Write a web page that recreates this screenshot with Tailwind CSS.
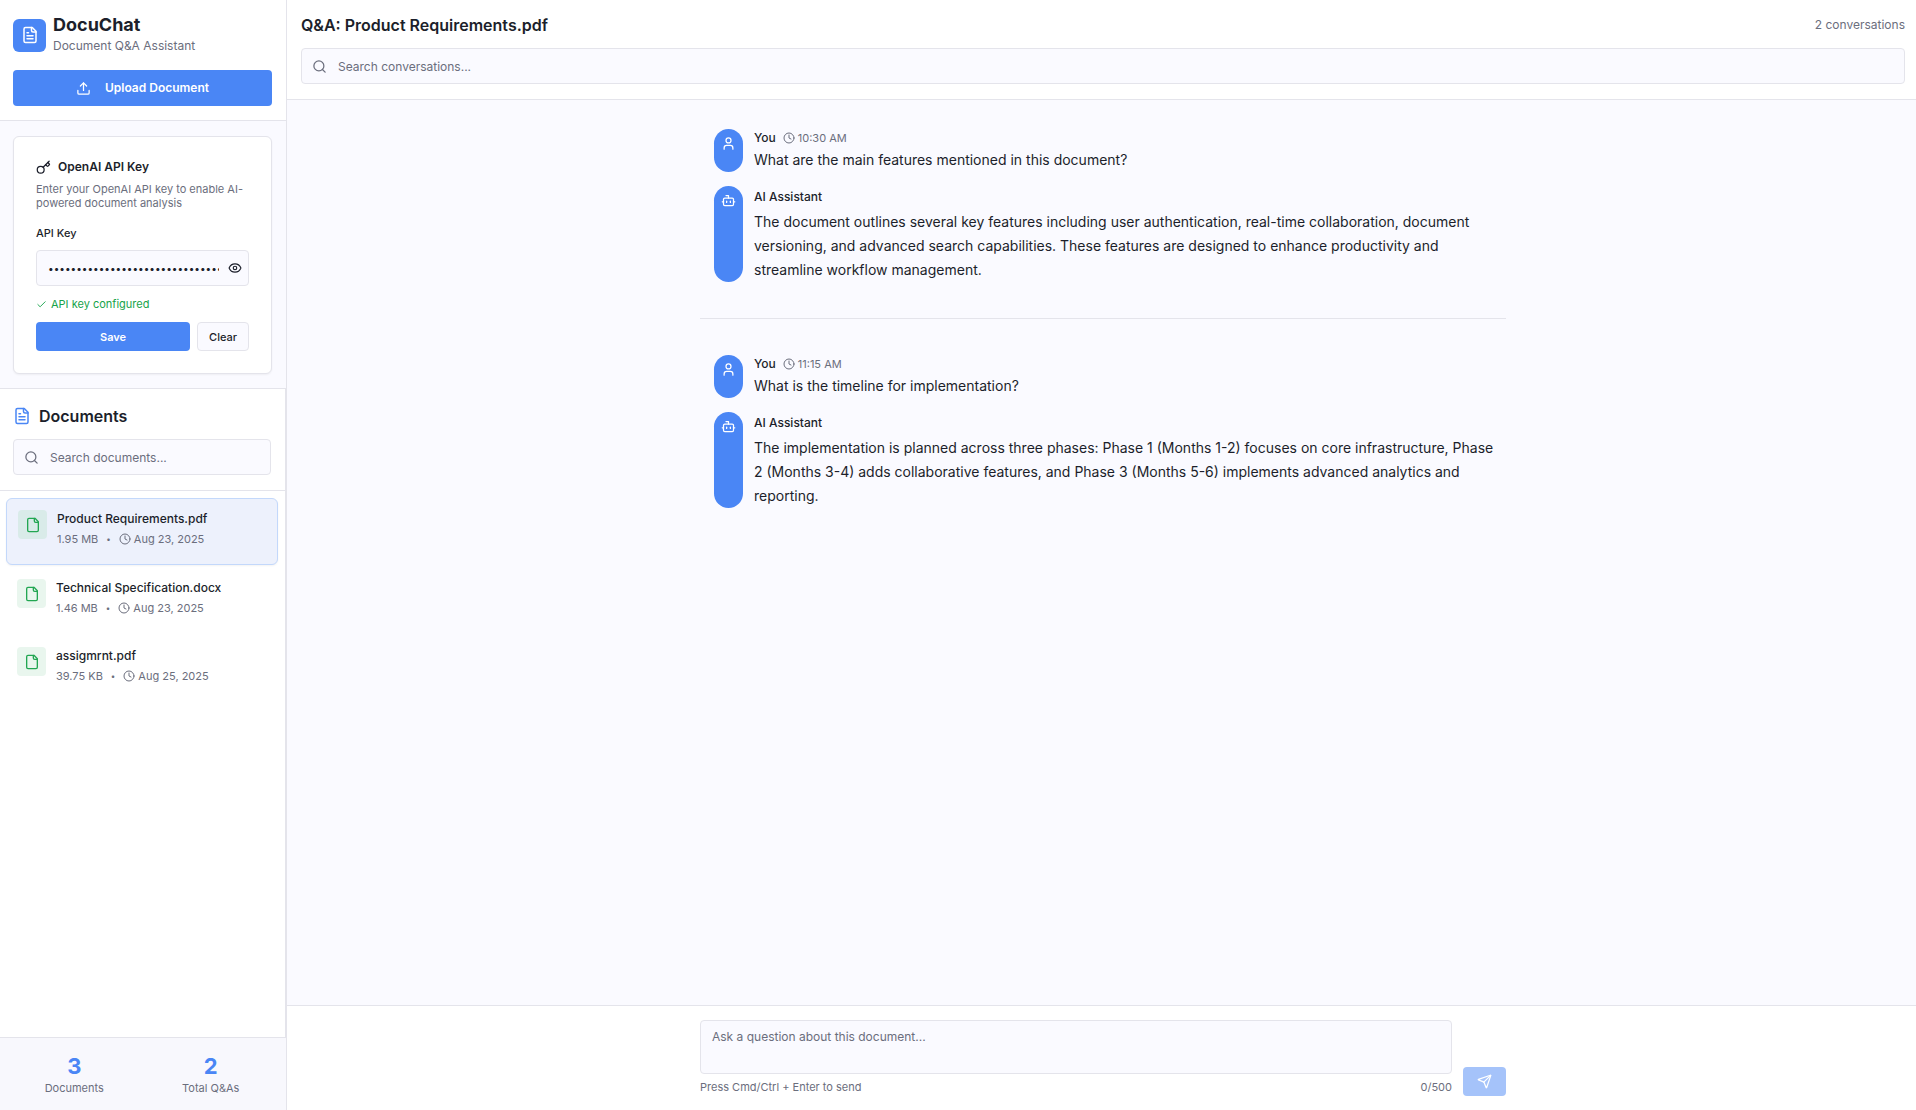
<!DOCTYPE html>
<html lang="en">
<head>
<meta charset="utf-8">
<title>DocuChat</title>
<script src="https://cdn.jsdelivr.net/npm/@tailwindcss/browser@4"></script>
</head>
<body class="flex h-screen overflow-hidden bg-[#fafaff] font-['Inter',sans-serif] text-[12px] leading-[18px] text-[#1c1f2b]">
<svg class="hidden" aria-hidden="true">
  <symbol id="file-text" viewBox="0 0 24 24"><path d="M15 2H6a2 2 0 0 0-2 2v16a2 2 0 0 0 2 2h12a2 2 0 0 0 2-2V7Z"/><path d="M14 2v4a2 2 0 0 0 2 2h4"/><path d="M10 9H8"/><path d="M16 13H8"/><path d="M16 17H8"/></symbol>
  <symbol id="file" viewBox="0 0 24 24"><path d="M15 2H6a2 2 0 0 0-2 2v16a2 2 0 0 0 2 2h12a2 2 0 0 0 2-2V7Z"/><path d="M14 2v4a2 2 0 0 0 2 2h4"/></symbol>
  <symbol id="upload" viewBox="0 0 24 24"><path d="M21 15v4a2 2 0 0 1-2 2H5a2 2 0 0 1-2-2v-4"/><path d="m17 8-5-5-5 5"/><path d="M12 3v12"/></symbol>
  <symbol id="key" viewBox="0 0 24 24"><path d="m15.5 7.500 2.300 2.300a1 1 0 0 0 1.400 0l2.100-2.100a1 1 0 0 0 0-1.400L19 4"/><path d="m21 2-9.600 9.600"/><circle cx="7.500" cy="15.500" r="5.500"/></symbol>
  <symbol id="eye" viewBox="0 0 24 24"><path d="M2.062 12.348a1 1 0 0 1 0-.696 10.750 10.750 0 0 1 19.876 0 1 1 0 0 1 0 .696 10.750 10.750 0 0 1-19.876 0"/><circle cx="12" cy="12" r="3"/></symbol>
  <symbol id="check" viewBox="0 0 24 24"><path d="M20 6 9 17l-5-5"/></symbol>
  <symbol id="search" viewBox="0 0 24 24"><circle cx="11" cy="11" r="8"/><path d="m21 21-4.300-4.300"/></symbol>
  <symbol id="clock" viewBox="0 0 24 24"><circle cx="12" cy="12" r="10"/><path d="M12 6v6l4 2"/></symbol>
  <symbol id="user" viewBox="0 0 24 24"><path d="M19 21v-2a4 4 0 0 0-4-4H9a4 4 0 0 0-4 4v2"/><circle cx="12" cy="7" r="4"/></symbol>
  <symbol id="bot" viewBox="0 0 24 24"><path d="M12 8V4H8"/><rect width="16" height="12" x="4" y="8" rx="2"/><path d="M2 14h2"/><path d="M20 14h2"/><path d="M15 13v2"/><path d="M9 13v2"/></symbol>
  <symbol id="send" viewBox="0 0 24 24"><path d="M14.536 21.686a.5.5 0 0 0 .937-.024l6.500-19a.496.496 0 0 0-.635-.635l-19 6.500a.5.5 0 0 0-.024.937l7.930 3.180a2 2 0 0 1 1.112 1.110z"/><path d="m21.854 2.147-10.940 10.939"/></symbol>
</svg>

<aside class="flex w-[287px] shrink-0 flex-col border-r border-[#e4e4eb]">
  <header class="border-b border-[#e4e4eb] bg-white pt-[14px] pr-[14px] pb-[14px] pl-[13px]">
    <div class="flex items-center gap-[7px]">
      <div class="flex size-[33px] items-center justify-center rounded-md bg-[#4a86f5] text-white">
        <svg class="size-[18px] fill-none stroke-current stroke-2 [stroke-linecap:round] [stroke-linejoin:round]"><use href="#file-text"/></svg>
      </div>
      <div>
        <h1 class="text-[18px] leading-[22px] font-bold">DocuChat</h1>
        <p class="leading-[20px] text-[#6b6e7d]">Document Q&amp;A Assistant</p>
      </div>
    </div>
    <button class="mt-[14px] flex h-[36px] w-full items-center justify-center gap-[14px] rounded bg-[#4a86f5] font-semibold text-white">
      <svg class="size-[15px] fill-none stroke-current stroke-2 [stroke-linecap:round] [stroke-linejoin:round]"><use href="#upload"/></svg>
      Upload Document
    </button>
  </header>

  <section class="border-b border-[#e4e4eb] pt-[15px] pr-[14px] pb-[14px] pl-[13px]">
    <form class="rounded-md border border-[#e4e4eb] bg-white px-[22px] pt-[21px] pb-[22px] text-[11px] shadow-xs">
      <h2 class="flex items-center gap-[7px] text-[12px] font-semibold">
        <svg class="size-[15px] fill-none stroke-current stroke-2 [stroke-linecap:round] [stroke-linejoin:round]"><use href="#key"/></svg>
        OpenAI API Key
      </h2>
      <p class="mt-[6px] leading-[14px] text-[#6b6e7d]">Enter your OpenAI API key to enable AI-powered document analysis</p>
      <label for="key-input" class="mt-[14px] block font-medium">API Key</label>
      <div class="relative mt-[8px]">
        <input id="key-input" type="password" value="sk-proj-0123456789abcdefghijklmnopqrstuvwxyz" class="h-[36px] w-full rounded border border-[#e4e4eb] bg-[#fafaff] pr-[29px] pl-[11px] text-[10px]">
        <button type="button" aria-label="Show key" class="absolute inset-y-0 right-0 flex w-[29px] items-center justify-center">
          <svg class="size-[14px] fill-none stroke-current stroke-2 [stroke-linecap:round] [stroke-linejoin:round]"><use href="#eye"/></svg>
        </button>
      </div>
      <p class="mt-[9px] flex items-center gap-[4px] text-[#16a34a]">
        <svg class="size-[11px] fill-none stroke-current stroke-2 [stroke-linecap:round] [stroke-linejoin:round]"><use href="#check"/></svg>
        API key configured
      </p>
      <div class="mt-[9px] flex gap-[7px]">
        <button type="button" class="h-[29px] flex-1 rounded bg-[#4a86f5] font-semibold text-white">Save</button>
        <button type="button" class="h-[29px] rounded border border-[#e4e4eb] bg-[#fafaff] px-[11px] font-medium">Clear</button>
      </div>
    </form>
  </section>

  <section class="flex min-h-0 flex-1 flex-col border-r border-[#e4e4eb] bg-white">
    <div class="border-b border-[#e4e4eb] pt-[14px] pr-[14px] pb-[15px] pl-[13px]">
      <h2 class="flex items-center gap-[8px] text-[16px] leading-[26px] font-semibold">
        <svg class="size-[18px] fill-none stroke-[#4a86f5] stroke-2 [stroke-linecap:round] [stroke-linejoin:round]"><use href="#file-text"/></svg>
        Documents
      </h2>
      <div class="relative mt-[10px]">
        <svg class="absolute top-[11px] left-[11px] size-[15px] fill-none stroke-[#6b6e7d] stroke-2 [stroke-linecap:round] [stroke-linejoin:round]"><use href="#search"/></svg>
        <input type="text" aria-label="Search documents" placeholder="Search documents..." class="h-[36px] w-full rounded border border-[#e4e4eb] bg-[#fafaff] pr-[11px] pl-[36px] placeholder:text-[#6b6e7d]">
      </div>
    </div>
    <ul class="flex flex-1 flex-col gap-[3px] pt-[7px] pr-[7px] pl-[6px]">
      <li class="flex h-[67px] items-start gap-[10px] rounded-md border border-[#c3d8fb] bg-[#edf1fc] p-[11px] shadow-xs">
        <div class="flex size-[29px] items-center justify-center rounded bg-[#d9ebe9] text-[#22a652]"><svg class="size-[16px] fill-none stroke-current stroke-2 [stroke-linecap:round] [stroke-linejoin:round]"><use href="#file"/></svg></div>
        <div>
          <h3 class="font-medium">Product Requirements.pdf</h3>
          <p class="mt-[2px] flex items-center gap-[8px] text-[11px] text-[#6b6e7d]"><span>1.95 MB</span><span class="text-[8px]">•</span><span class="flex items-center gap-[3px]"><svg class="size-[12px] fill-none stroke-current stroke-2 [stroke-linecap:round]"><use href="#clock"/></svg>Aug 23, 2025</span></p>
        </div>
      </li>
      <li class="flex h-[65px] items-start gap-[10px] p-[11px]">
        <div class="flex size-[29px] items-center justify-center rounded bg-[#e9f6ee] text-[#22a652]"><svg class="size-[16px] fill-none stroke-current stroke-2 [stroke-linecap:round] [stroke-linejoin:round]"><use href="#file"/></svg></div>
        <div>
          <h3 class="font-medium">Technical Specification.docx</h3>
          <p class="mt-[2px] flex items-center gap-[8px] text-[11px] text-[#6b6e7d]"><span>1.46 MB</span><span class="text-[8px]">•</span><span class="flex items-center gap-[3px]"><svg class="size-[12px] fill-none stroke-current stroke-2 [stroke-linecap:round]"><use href="#clock"/></svg>Aug 23, 2025</span></p>
        </div>
      </li>
      <li class="flex h-[65px] items-start gap-[10px] p-[11px]">
        <div class="flex size-[29px] items-center justify-center rounded bg-[#e9f6ee] text-[#22a652]"><svg class="size-[16px] fill-none stroke-current stroke-2 [stroke-linecap:round] [stroke-linejoin:round]"><use href="#file"/></svg></div>
        <div>
          <h3 class="font-medium">assigmrnt.pdf</h3>
          <p class="mt-[2px] flex items-center gap-[8px] text-[11px] text-[#6b6e7d]"><span>39.75 KB</span><span class="text-[8px]">•</span><span class="flex items-center gap-[3px]"><svg class="size-[12px] fill-none stroke-current stroke-2 [stroke-linecap:round]"><use href="#clock"/></svg>Aug 25, 2025</span></p>
        </div>
      </li>
    </ul>
  </section>

  <footer class="grid grid-cols-2 gap-[14px] border-t border-[#e4e4eb] bg-[#f8f8fd] pt-[15px] pr-[14px] pb-[13px] pl-[13px] text-center text-[11px] leading-[18px] text-[#6b6e7d]">
    <div><p class="text-[22px] leading-[26px] font-bold text-[#4a86f5]">3</p><p>Documents</p></div>
    <div><p class="text-[22px] leading-[26px] font-bold text-[#4a86f5]">2</p><p>Total Q&amp;As</p></div>
  </footer>
</aside>

<main class="flex min-w-0 flex-1 flex-col">
  <header class="border-b border-[#e4e4eb] bg-white pt-[14px] pr-[11px] pb-[15px] pl-[14px]">
    <div class="flex items-center justify-between">
      <h2 class="text-[16px] leading-[22px] font-semibold">Q&amp;A: Product Requirements.pdf</h2>
      <span class="text-[#6b6e7d]">2 conversations</span>
    </div>
    <div class="relative mt-[12px]">
      <svg class="absolute top-[11px] left-[11px] size-[15px] fill-none stroke-[#6b6e7d] stroke-2 [stroke-linecap:round] [stroke-linejoin:round]"><use href="#search"/></svg>
      <input type="text" aria-label="Search conversations" placeholder="Search conversations..." class="h-[36px] w-full rounded border border-[#e4e4eb] bg-[#fafaff] pr-[11px] pl-[36px] placeholder:text-[#6b6e7d]">
    </div>
  </header>

  <div class="min-h-0 flex-1 pt-[29px] pr-[11px] pl-[14px]">
    <div class="mx-auto flex max-w-[806px] flex-col">
      <article class="flex flex-col gap-[14px] border-b border-[#e4e4eb] pr-[4px] pb-[36px] pl-[14px]">
        <div class="flex gap-[11px]">
          <div class="flex w-[29px] shrink-0 justify-center rounded-full bg-[#4a86f5] pt-[7px] text-white"><svg class="size-[15px] fill-none stroke-current stroke-2 [stroke-linecap:round] [stroke-linejoin:round]"><use href="#user"/></svg></div>
          <div>
            <p class="flex items-center gap-[7px] font-medium">You <span class="flex items-center gap-[3px] text-[11px] font-normal text-[#6b6e7d]"><svg class="size-[12px] fill-none stroke-current stroke-2 [stroke-linecap:round]"><use href="#clock"/></svg>10:30 AM</span></p>
            <p class="mt-[1px] text-[14px] leading-[24px]">What are the main features mentioned in this document?</p>
          </div>
        </div>
        <div class="flex gap-[11px]">
          <div class="flex w-[29px] shrink-0 justify-center rounded-full bg-[#4a86f5] pt-[7px] text-white"><svg class="size-[15px] fill-none stroke-current stroke-2 [stroke-linecap:round] [stroke-linejoin:round]"><use href="#bot"/></svg></div>
          <div class="pt-[2px]">
            <p class="font-medium">AI Assistant</p>
            <p class="mt-[4px] text-[14px] leading-[24px]">The document outlines several key features including user authentication, real-time collaboration, document versioning, and advanced search capabilities. These features are designed to enhance productivity and streamline workflow management.</p>
          </div>
        </div>
      </article>
      <article class="flex flex-col gap-[14px] pt-[36px] pr-[4px] pl-[14px]">
        <div class="flex gap-[11px]">
          <div class="flex w-[29px] shrink-0 justify-center rounded-full bg-[#4a86f5] pt-[7px] text-white"><svg class="size-[15px] fill-none stroke-current stroke-2 [stroke-linecap:round] [stroke-linejoin:round]"><use href="#user"/></svg></div>
          <div>
            <p class="flex items-center gap-[7px] font-medium">You <span class="flex items-center gap-[3px] text-[11px] font-normal text-[#6b6e7d]"><svg class="size-[12px] fill-none stroke-current stroke-2 [stroke-linecap:round]"><use href="#clock"/></svg>11:15 AM</span></p>
            <p class="mt-[1px] text-[14px] leading-[24px]">What is the timeline for implementation?</p>
          </div>
        </div>
        <div class="flex gap-[11px]">
          <div class="flex w-[29px] shrink-0 justify-center rounded-full bg-[#4a86f5] pt-[7px] text-white"><svg class="size-[15px] fill-none stroke-current stroke-2 [stroke-linecap:round] [stroke-linejoin:round]"><use href="#bot"/></svg></div>
          <div class="pt-[2px]">
            <p class="font-medium">AI Assistant</p>
            <p class="mt-[4px] text-[14px] leading-[24px]">The implementation is planned across three phases: Phase 1 (Months 1-2) focuses on core infrastructure, Phase 2 (Months 3-4) adds collaborative features, and Phase 3 (Months 5-6) implements advanced analytics and reporting.</p>
          </div>
        </div>
      </article>
    </div>
  </div>

  <footer class="border-t border-[#e4e4eb] bg-white pt-[14px] pr-[11px] pb-[14px] pl-[14px]">
    <form class="mx-auto flex max-w-[806px] items-end gap-[11px]">
      <div class="flex-1 text-[11px] text-[#6b6e7d]">
        <textarea aria-label="Question" placeholder="Ask a question about this document..." class="block h-[54px] w-full resize-none rounded border border-[#e4e4eb] bg-[#fafaff] px-[11px] py-[7px] text-[12px] placeholder:text-[#6b6e7d]"></textarea>
        <div class="mt-[4px] flex justify-between"><span>Press Cmd/Ctrl + Enter to send</span><span>0/500</span></div>
      </div>
      <button type="button" aria-label="Send" class="flex h-[29px] w-[43px] items-center justify-center rounded bg-[#a5c3fa] text-white"><svg class="size-[15px] fill-none stroke-current stroke-2 [stroke-linecap:round] [stroke-linejoin:round]"><use href="#send"/></svg></button>
    </form>
  </footer>
</main>
</body>
</html>
